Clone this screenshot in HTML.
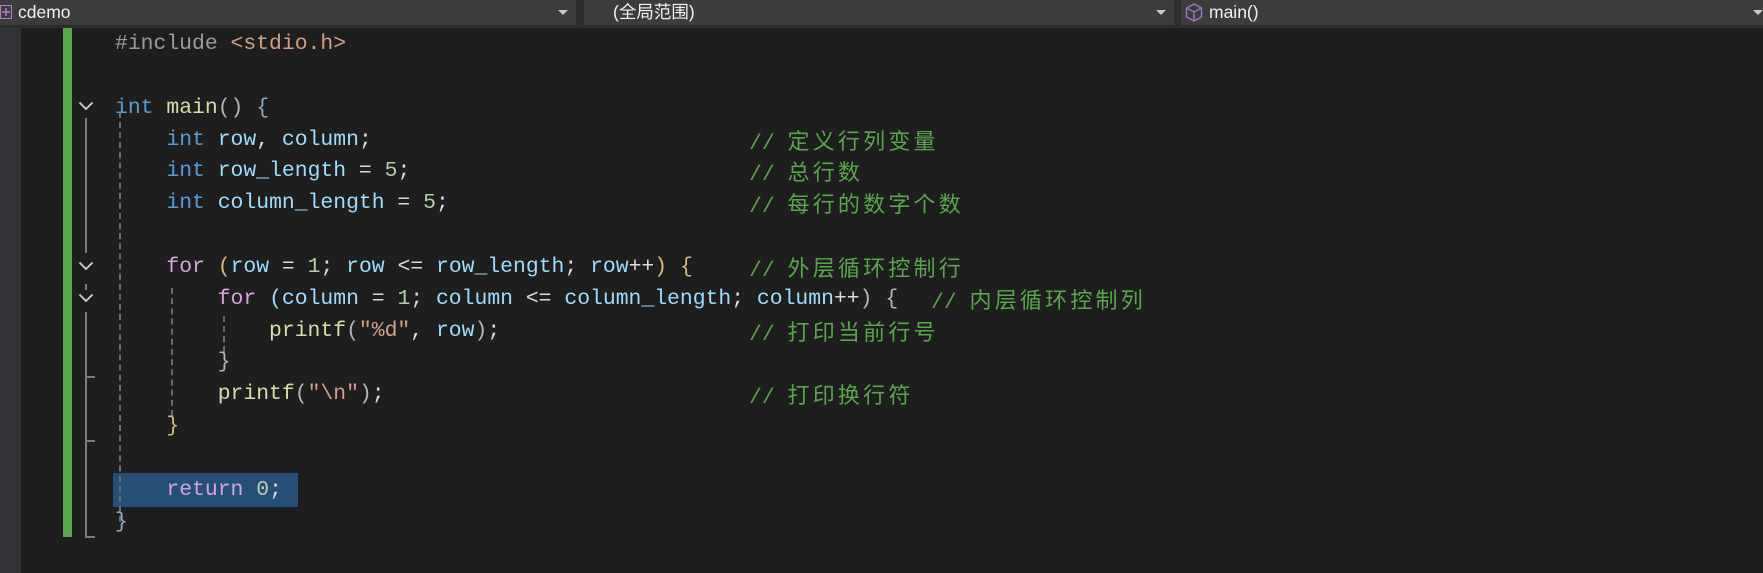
<!DOCTYPE html>
<html><head><meta charset="utf-8"><style>
*{margin:0;padding:0;box-sizing:border-box}
body{width:1763px;height:573px;background:#1e1e1e;overflow:hidden;position:relative;font-family:"Liberation Sans","Noto Sans CJK SC",sans-serif}
.hdr{position:absolute;top:0;left:0;width:1763px;height:28px;background:#2d2d30}
.cb{position:absolute;top:0;height:25px;background:#3c3c3c;color:#f1f1f1;font-size:17.5px;line-height:25px}
.arr{position:absolute;right:8px;top:10px;width:0;height:0;border-left:5px solid transparent;border-right:5px solid transparent;border-top:5px solid #c8c8c8}
.gut{position:absolute;top:28px;left:0;width:21px;height:545px;background:#333337}
.green{position:absolute;left:63px;top:28px;width:9px;height:509px;background:#57a64a}
.ln{position:absolute;left:115px;height:32px;line-height:32px;font-family:"Liberation Mono","Noto Sans CJK SC",monospace;font-size:21.4px;color:#dcdcdc;white-space:pre}
.cm{position:absolute;height:32px;line-height:32px;font-family:"Liberation Mono",monospace;font-size:21.4px;color:#57a64a;white-space:pre}
.cm span{font-family:"Noto Sans CJK SC",sans-serif;font-size:22px;letter-spacing:3.2px}
.k{color:#569cd6}.c{color:#d8a0df}.v{color:#9cdcfe}.f{color:#dcdcaa}.n{color:#b5cea8}.s{color:#d69d85}.p{color:#9b9b9b}.g{color:#b4b4b4}.y{color:#d7ba7d}
.vg{position:absolute;width:0;border-left:2px dashed #6a6a6a}
.fl{position:absolute;left:85px;width:2px;background:#7a7a7a}
.chev{position:absolute;left:78px;width:16px;height:10px}
</style></head><body>
<div class="hdr"></div>
<div class="cb" style="left:0;width:576px"><svg style="position:absolute;left:0;top:5px" width="12" height="14"><rect x="0.5" y="0.5" width="11" height="13" fill="none" stroke="#b180d7"/><path d="M6 3v8M2 7h8" stroke="#b180d7" stroke-width="1.5"/></svg><span style="position:absolute;left:18px">cdemo</span><div class="arr"></div></div>
<div class="cb" style="left:584px;width:590px"><span style="position:absolute;left:29px">(全局范围)</span><div class="arr"></div></div>
<div class="cb" style="left:1181px;width:582px"><svg style="position:absolute;left:4px;top:3px" width="18" height="19" viewBox="0 0 18 19"><path d="M9 1L16.5 5v9L9 18 1.5 14V5z M1.5 5L9 9l7.5-4 M9 9v9" fill="none" stroke="#9b77c9" stroke-width="1.4"/></svg><span style="position:absolute;left:28px">main()</span><div class="arr" style="right:0"></div></div>
<div class="gut"></div>
<div class="green"></div>
<div style="position:absolute;left:113px;top:473px;width:185px;height:34px;background:#264f78"></div>
<div class="vg" style="left:119px;top:112px;height:410px"></div>
<div class="vg" style="left:171px;top:288px;height:128px"></div>
<div class="vg" style="left:223px;top:316px;height:36px"></div>
<div class="fl" style="top:118px;height:135px"></div>
<div class="fl" style="top:284px;height:6px"></div>
<div class="fl" style="top:312px;height:226px"></div>
<div style="position:absolute;left:85px;top:376px;width:10px;height:2px;background:#7a7a7a"></div>
<div style="position:absolute;left:85px;top:440px;width:10px;height:2px;background:#7a7a7a"></div>
<div style="position:absolute;left:85px;top:536px;width:10px;height:2px;background:#7a7a7a"></div>
<svg class="chev" style="top:101px" viewBox="0 0 16 10"><path d="M1.5 1.5L8 8l6.5-6.5" fill="none" stroke="#d0d0d0" stroke-width="1.8"/></svg>
<svg class="chev" style="top:261px" viewBox="0 0 16 10"><path d="M1.5 1.5L8 8l6.5-6.5" fill="none" stroke="#d0d0d0" stroke-width="1.8"/></svg>
<svg class="chev" style="top:293px" viewBox="0 0 16 10"><path d="M1.5 1.5L8 8l6.5-6.5" fill="none" stroke="#d0d0d0" stroke-width="1.8"/></svg>
<div class="ln" style="top:28px"><span class="p">#include </span><span class="s">&lt;stdio.h&gt;</span></div>
<div class="ln" style="top:92px"><span class="k">int</span> <span class="f">main</span><span class="g">()</span> <span style="color:#8fa8c8">{</span></div>
<div class="ln" style="top:124px">    <span class="k">int</span> <span class="v">row</span>, <span class="v">column</span>;</div>
<div class="ln" style="top:155px">    <span class="k">int</span> <span class="v">row_length</span> = <span class="n">5</span>;</div>
<div class="ln" style="top:187px">    <span class="k">int</span> <span class="v">column_length</span> = <span class="n">5</span>;</div>
<div class="ln" style="top:251px">    <span class="c">for</span> <span class="y">(</span><span class="v">row</span> = <span class="n">1</span>; <span class="v">row</span> &lt;= <span class="v">row_length</span>; <span class="v">row</span>++<span class="y">)</span> <span class="y">{</span></div>
<div class="ln" style="top:283px">        <span class="c">for</span> <span class="v">(column</span> = <span class="n">1</span>; <span class="v">column</span> &lt;= <span class="v">column_length</span>; <span class="v">column</span>++<span class="g">)</span> <span class="g">{</span></div>
<div class="ln" style="top:315px">            <span class="f">printf</span><span class="g">(</span><span class="s">"%d"</span>, <span class="v">row</span><span class="g">)</span>;</div>
<div class="ln" style="top:346px">        <span class="g">}</span></div>
<div class="ln" style="top:378px">        <span class="f">printf</span><span class="g">(</span><span class="s">"\n"</span><span class="g">)</span>;</div>
<div class="ln" style="top:410px">    <span class="y">}</span></div>
<div class="ln" style="top:474px">    <span class="c">return</span> <span class="n">0</span>;</div>
<div class="ln" style="top:506px"><span style="color:#8fa8c8">}</span></div>
<div class="cm" style="left:749px;top:124px">// <span>定义行列变量</span></div>
<div class="cm" style="left:749px;top:155px">// <span>总行数</span></div>
<div class="cm" style="left:749px;top:187px">// <span>每行的数字个数</span></div>
<div class="cm" style="left:749px;top:251px">// <span>外层循环控制行</span></div>
<div class="cm" style="left:931px;top:283px">// <span>内层循环控制列</span></div>
<div class="cm" style="left:749px;top:315px">// <span>打印当前行号</span></div>
<div class="cm" style="left:749px;top:378px">// <span>打印换行符</span></div>
</body></html>
